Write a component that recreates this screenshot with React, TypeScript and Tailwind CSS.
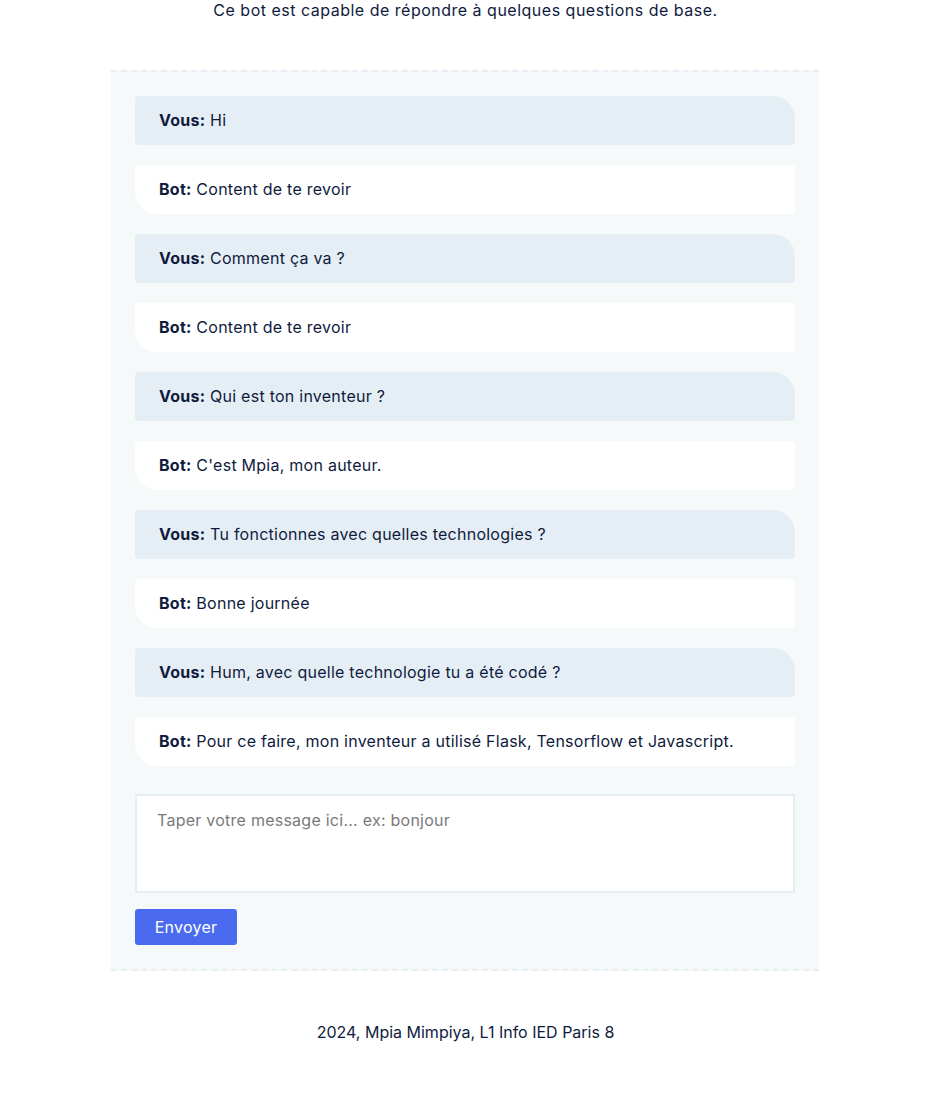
import React from 'react'

const messages = [
  { who: 'Vous', text: 'Hi' },
  { who: 'Bot', text: 'Content de te revoir' },
  { who: 'Vous', text: 'Comment ça va ?' },
  { who: 'Bot', text: 'Content de te revoir' },
  { who: 'Vous', text: 'Qui est ton inventeur ?' },
  { who: 'Bot', text: "C'est Mpia, mon auteur." },
  { who: 'Vous', text: 'Tu fonctionnes avec quelles technologies ?' },
  { who: 'Bot', text: 'Bonne journée' },
  { who: 'Vous', text: 'Hum, avec quelle technologie tu a été codé ?' },
  { who: 'Bot', text: 'Pour ce faire, mon inventeur a utilisé Flask, Tensorflow et Javascript.' },
]

// single chat bubble, user ones are blue-grey with rounded top-right
const Bubble = ({ who, text }: { who: string; text: string }) => {
  const isUser = who === 'Vous'
  return (
    <div
      className={
        isUser
          ? 'flex h-[49px] items-center px-6 pb-[2px] bg-[#e6eef5] rounded-[4px] rounded-tr-[22px]'
          : 'flex h-[49px] items-center px-6 pb-[2px] bg-white rounded-[4px] rounded-bl-[22px]'
      }
    >
      <span>
        <b className="font-bold">{who}:</b> {text}
      </span>
    </div>
  )
}

export default function App() {
  return (
    <div className="min-h-[1093px] bg-white text-[16px] leading-6 text-[#0f1b3d] font-['Inter','Liberation_Sans',sans-serif]">
      <p className="text-center -mt-[2px] tracking-[0.5px]">Ce bot est capable de répondre à quelques questions de base.</p>

      {/* chat box */}
      <div className="ml-[111px] mt-[48px] w-[708px] border-y-2 border-dashed border-[#e8eef3] bg-[#f5f9fa] px-6 pt-6 pb-6 tracking-[0.25px]">
        <div className="flex flex-col gap-5">
          {messages.map((m, i) => (
            <Bubble key={i} who={m.who} text={m.text} />
          ))}
        </div>

        <textarea
          className="mt-[28px] block h-[99px] w-full resize-none border-2 border-[#e6edf3] bg-white px-5 pt-[12px] text-[16px] leading-6 tracking-[0.25px] outline-none placeholder:text-[#7a7a7a]"
          placeholder="Taper votre message ici... ex: bonjour"
        />

        <button className="mt-4 h-9 w-[102px] rounded-[3px] bg-[#4a6bef] text-white">Envoyer</button>
      </div>

      <p className="mt-[49px] text-center">2024, Mpia Mimpiya, L1 Info IED Paris 8</p>
    </div>
  )
}
